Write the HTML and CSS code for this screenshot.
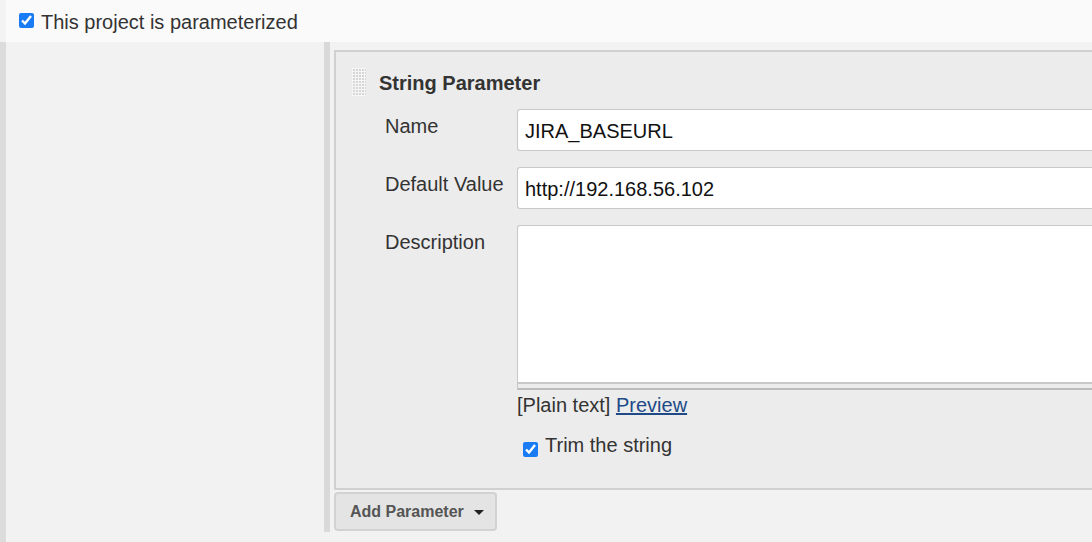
FILE: index.html
```html
<!DOCTYPE html>
<html>
<head>
<meta charset="utf-8">
<link rel="stylesheet" href="styles.css">
</head>
<body>
<div class="top">
  <label class="toplabel"><input type="checkbox" class="cb" checked> <span>This project is parameterized</span></label>
</div>
<div class="main">
  <div class="inner">
    <div class="panel">
      <div class="header">
        <div class="handle"></div>
        <div class="title">String Parameter</div>
      </div>
      <div class="row">
        <div class="label">Name</div>
        <div class="field"><input class="text" type="text" value="JIRA_BASEURL"></div>
      </div>
      <div class="row">
        <div class="label">Default Value</div>
        <div class="field"><input class="text" type="text" value="http://192.168.56.102"></div>
      </div>
      <div class="row">
        <div class="label">Description</div>
        <div class="field">
          <textarea class="area"></textarea>
          <div class="grip"></div>
          <div class="hint">[Plain text] <a href="#" class="link">Preview</a></div>
          <label class="trim"><input type="checkbox" class="cb" checked> <span>Trim the string</span></label>
        </div>
      </div>
    </div>
    <button class="addbtn">Add Parameter <span class="caret"></span></button>
  </div>
</div>
</body>
</html>
```
FILE: styles.css
```css
html, body {
  margin: 0;
  padding: 0;
  overflow: hidden;
  width: 1092px;
  height: 542px;
  background: #f2f2f2;
  font-family: "Liberation Sans", Arial, Helvetica, sans-serif;
  color: #333;
}
.top {
  height: 42px;
  background: #fafafa;
  border-left: 6px solid #f3f3f3;
  box-sizing: border-box;
  display: flex;
  align-items: center;
  padding-left: 13px;
}
.toplabel {
  display: flex;
  align-items: center;
  font-size: 20px;
  color: #333;
}
.toplabel .cb { margin-top: -1px; }
.toplabel span { margin-left: 7px; margin-top: 3px; }
.cb {
  width: 15px;
  height: 15px;
  margin: 0;
  accent-color: #1a7cf5;
}
.main {
  height: 500px;
  border-left: 6px solid #dcdcdc;
  box-sizing: border-box;
  padding-left: 318px;
}
.inner {
  padding-top: 8px;
  height: 490px;
  box-sizing: border-box;
  border-left: 6px solid #d9d9d9;
  padding-left: 4px;
  display: flex;
  flex-direction: column;
  align-items: flex-start;
}
.panel {
  align-self: stretch;
  height: 440px;
  box-sizing: border-box;
  border: 2px solid #d0d0d0;
  border-right: none;
  background: #ececec;
  padding: 16px 0 0 16px;
}
.header {
  display: flex;
  align-items: center;
  height: 28px;
}
.handle {
  width: 14px;
  height: 28px;
  background-color: #d6d6d6;
  background-image: linear-gradient(90deg, #f6f6f6 1px, transparent 1px), linear-gradient(#f6f6f6 1px, transparent 1px);
  background-size: 3px 3px;
}
.title {
  font-weight: bold;
  font-size: 20px;
  margin-left: 13px;
  margin-top: 2px;
  color: #333;
}
.row {
  display: flex;
  margin-top: 13px;
}
.row + .row { margin-top: 16px; }
.label {
  width: 165px;
  padding-left: 33px;
  box-sizing: border-box;
  flex: none;
  white-space: nowrap;
  padding-top: 6px;
  font-size: 20px;
  color: #333;
}
.field {
  flex: 1;
  min-width: 0;
}
.text {
  display: block;
  width: 100%;
  height: 42px;
  box-sizing: border-box;
  border: 1px solid #c8c8c8;
  border-right: none;
  border-radius: 3px 0 0 3px;
  background: #fff;
  font-family: "Liberation Sans", Arial, Helvetica, sans-serif;
  font-size: 20px;
  color: #111;
  padding: 2px 7px 0;
  margin: 0;
}
.area {
  display: block;
  width: 100%;
  height: 159px;
  box-sizing: border-box;
  border: 1px solid #c8c8c8;
  border-right: none;
  border-bottom: 2px solid #c8c8c8;
  border-radius: 3px 0 0 0;
  background: #fff;
  margin: 0;
  resize: none;
}
.grip {
  height: 4px;
  border-left: 1px solid #c8c8c8;
  border-bottom: 2px solid #bcbcbc;
}
.hint {
  margin-top: 4px;
  font-size: 20px;
  color: #333;
}
.link {
  color: #204a87;
  text-decoration: underline;
}
.trim {
  display: flex;
  align-items: center;
  margin-top: 16px;
  margin-left: 6px;
  font-size: 20px;
}
.trim .cb { margin-top: 9px; }
.trim span { margin-left: 7px; }
.addbtn {
  margin-top: 2px;
  width: 163px;
  height: 39px;
  box-sizing: border-box;
  background: #e4e4e4;
  border: 2px solid #d2d2d2;
  border-radius: 4px;
  font-family: "Liberation Sans", Arial, Helvetica, sans-serif;
  font-weight: bold;
  font-size: 16px;
  color: #555;
  text-align: left;
  padding: 0 0 0 14px;
  display: flex;
  align-items: center;
}
.caret {
  display: inline-block;
  width: 0;
  height: 0;
  border-left: 5px solid transparent;
  border-right: 5px solid transparent;
  border-top: 5px solid #222;
  margin-left: 10px;
  margin-top: 2px;
}
```
